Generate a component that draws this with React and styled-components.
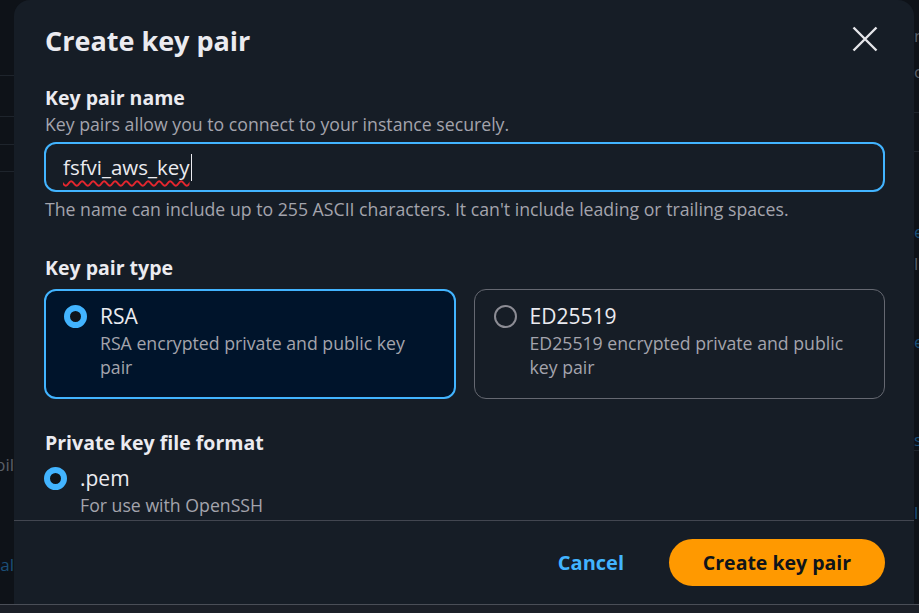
import React from "react";
import styled, { createGlobalStyle } from "styled-components";

const GlobalStyle = createGlobalStyle`
  html, body {
    margin: 0;
    padding: 0;
    background: #0e1218;
    font-family: "Open Sans", "Noto Sans", sans-serif;
    overflow: hidden;
  }
`;

const Screen = styled.div`
  position: relative;
  width: 919px;
  height: 613px;
  overflow: hidden;
  background: #0e1218;
`;

// console page sitting behind the dialog (only its edges show)
const Page = styled.div`
  height: 613px;
  display: flex;
  justify-content: space-between;
  font-size: 17px;
`;

const PageCol = styled.div`
  width: ${props => props.w}px;
  overflow: hidden;
  display: flex;
  flex-direction: column;
  align-items: ${props => (props.right ? "flex-start" : "flex-end")};
`;

const PageRow = styled.div`
  flex: none;
  width: 100%;
  height: ${props => props.h}px;
  border-bottom: ${props => (props.line ? "1px solid #1e242c" : "none")};
  display: flex;
  align-items: center;
  justify-content: ${props => (props.right ? "flex-start" : "flex-end")};
  color: ${props => (props.link ? "#1b4f78" : "#5a5f68")};
  white-space: nowrap;
`;

const Modal = styled.div`
  position: absolute;
  left: 14px;
  top: 0;
  width: 900px;
  height: 604px;
  background: #161d26;
  border-radius: 16px 16px 0 0;
  display: flex;
  flex-direction: column;
  color: #ebebf0;
`;

const Header = styled.div`
  display: flex;
  justify-content: space-between;
  align-items: flex-start;
  padding: 22px 35px 0 31px;
`;

const Title = styled.h1`
  margin: 0;
  font-size: 27px;
  line-height: 38px;
  font-weight: 700;
  color: #ebebf0;
`;

const Close = styled.button`
  background: none;
  border: none;
  padding: 0;
  margin-top: 3px;
  width: 28px;
  height: 28px;
  display: flex;
  align-items: center;
  justify-content: center;
  cursor: pointer;
`;

const Body = styled.div`
  flex: 1;
  padding: 24px 29px 0 30px;
  display: flex;
  flex-direction: column;
`;

const Field = styled.div`
  display: flex;
  flex-direction: column;
  margin-bottom: ${props => props.mb || 0}px;
`;

const Label = styled.div`
  font-size: 19.5px;
  line-height: 28px;
  font-weight: 700;
  color: #ebebf0;
  padding-left: 1px;
`;

const Description = styled.div`
  font-size: 17.7px;
  line-height: 25px;
  color: #a4a4ad;
  padding-left: 1px;
`;

const Input = styled.div`
  margin: 5px 0 5px;
  height: 50px;
  box-sizing: border-box;
  border: 2px solid #42b4ff;
  border-radius: 12px;
  background: #161d26;
  display: flex;
  align-items: center;
  padding-left: 17px;
  font-size: 20.5px;
  color: #ebebf0;
`;

const Misspelled = styled.span`
  text-decoration: underline wavy #e5262e;
  text-decoration-thickness: 1.5px;
  text-underline-offset: 5px;
  text-decoration-skip-ink: none;
`;

const Caret = styled.span`
  display: inline-block;
  width: 1.5px;
  height: 27px;
  background: #ebebf0;
  margin-left: 1px;
`;

const Tiles = styled.div`
  display: grid;
  grid-template-columns: 1fr 1fr;
  gap: 18px;
  margin-top: 7px;
`;

const Tile = styled.div`
  box-sizing: border-box;
  height: 110px;
  border-radius: 12px;
  border: ${props => (props.selected ? "2px solid #42b4ff" : "1px solid #656871")};
  background: ${props => (props.selected ? "#00142b" : "transparent")};
  padding: ${props => (props.selected ? "10px 30px 0 18px" : "11px 31px 0 19px")};
  display: flex;
  gap: 13px;
`;

const Radio = styled.span`
  flex: none;
  box-sizing: border-box;
  width: 23px;
  height: 23px;
  border-radius: 50%;
  margin-top: 4px;
  border: ${props => (props.checked ? "6px solid #42b4ff" : "2px solid #8c8c94")};
  background: ${props => (props.checked ? "#0f141a" : "transparent")};
`;

const OptionText = styled.div`
  display: flex;
  flex-direction: column;
`;

const OptionLabel = styled.div`
  font-size: 21px;
  line-height: 30px;
  color: #ebebf0;
`;

const OptionDesc = styled.div`
  font-size: 17.7px;
  line-height: 24px;
  color: #a4a4ad;
`;

const RadioRow = styled.div`
  display: flex;
  gap: 13px;
  margin-top: 6px;
`;

const Footer = styled.div`
  border-top: 1px solid #424650;
  height: 84px;
  box-sizing: border-box;
  display: flex;
  align-items: center;
  justify-content: flex-end;
  gap: 45px;
  padding: 0 29px 0 0;
`;

const LinkButton = styled.button`
  background: none;
  border: none;
  font-family: inherit;
  font-size: 20px;
  font-weight: 700;
  color: #42b4ff;
  padding: 0;
  cursor: pointer;
`;

const PrimaryButton = styled.button`
  background: #ff9900;
  border: none;
  border-radius: 24px;
  height: 47px;
  width: 216px;
  font-family: inherit;
  font-size: 19.5px;
  font-weight: 700;
  color: #0f141a;
  cursor: pointer;
`;

const BottomBar = styled.div`
  position: absolute;
  left: 0;
  right: 0;
  bottom: 0;
  height: 8px;
  background: #1b1f27;
  border-top: 1px solid #4a4e57;
`;

export default function App() {
  return (
    <>
      <GlobalStyle />
      <Screen>
        <Page>
          <PageCol w={14}>
            <PageRow h={75} line />
            <PageRow h={40} line />
            <PageRow h={27} line />
            <PageRow h={26} line />
            <PageRow h={278} />
            <PageRow h={28}>bil</PageRow>
            <PageRow h={72} />
            <PageRow h={28} link>al</PageRow>
          </PageCol>
          <PageCol w={5} right>
            <PageRow h={22} />
            <PageRow h={26} right>n</PageRow>
            <PageRow h={10} />
            <PageRow h={26} right>o</PageRow>
            <PageRow h={28} right line />
            <PageRow h={38} right line />
            <PageRow h={68} />
            <PageRow h={22} right link>e</PageRow>
            <PageRow h={10} />
            <PageRow h={22} right>l</PageRow>
            <PageRow h={56} />
            <PageRow h={22} right link>e</PageRow>
            <PageRow h={76} />
            <PageRow h={22} right link line>s</PageRow>
            <PageRow h={50} />
            <PageRow h={22} right link>l</PageRow>
          </PageCol>
        </Page>

        <Modal>
          <Header>
            <Title>Create key pair</Title>
            <Close aria-label="Close">
              <svg width="26" height="26" viewBox="0 0 26 26">
                <path
                  d="M1.5 1.5 L24.5 24.5 M24.5 1.5 L1.5 24.5"
                  stroke="#e6e6ea"
                  strokeWidth="2.4"
                  fill="none"
                />
              </svg>
            </Close>
          </Header>

          <Body>
            <Field mb={32}>
              <Label>Key pair name</Label>
              <Description>Key pairs allow you to connect to your instance securely.</Description>
              <Input>
                <Misspelled>fsfvi_aws_key</Misspelled>
                <Caret />
              </Input>
              <Description>
                The name can include up to 255 ASCII characters. It can't include leading or trailing spaces.
              </Description>
            </Field>

            <Field mb={30}>
              <Label>Key pair type</Label>
              <Tiles>
                <Tile selected>
                  <Radio checked />
                  <OptionText>
                    <OptionLabel>RSA</OptionLabel>
                    <OptionDesc>RSA encrypted private and public key pair</OptionDesc>
                  </OptionText>
                </Tile>
                <Tile>
                  <Radio />
                  <OptionText>
                    <OptionLabel>ED25519</OptionLabel>
                    <OptionDesc>ED25519 encrypted private and public key pair</OptionDesc>
                  </OptionText>
                </Tile>
              </Tiles>
            </Field>

            <Field>
              <Label>Private key file format</Label>
              <RadioRow>
                <Radio checked />
                <OptionText>
                  <OptionLabel>.pem</OptionLabel>
                  <OptionDesc>For use with OpenSSH</OptionDesc>
                </OptionText>
              </RadioRow>
            </Field>
          </Body>

          <Footer>
            <LinkButton>Cancel</LinkButton>
            <PrimaryButton>Create key pair</PrimaryButton>
          </Footer>
        </Modal>

        <BottomBar />
      </Screen>
    </>
  );
}
